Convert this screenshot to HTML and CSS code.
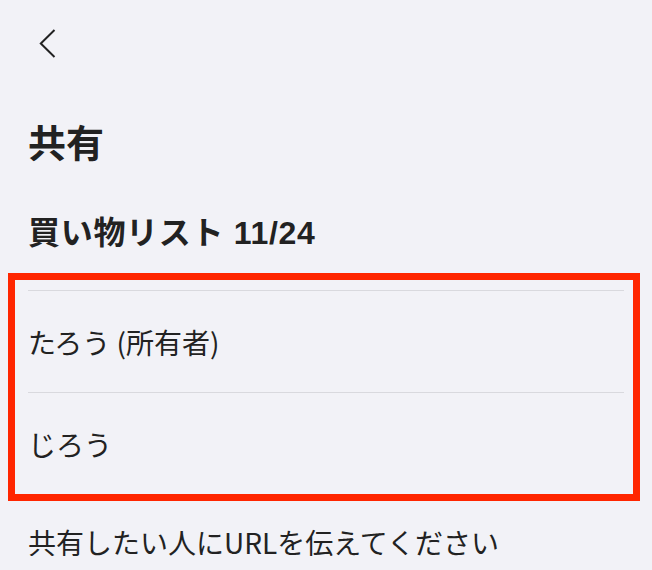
FILE: index.html
```html
<!DOCTYPE html>
<html lang="ja">
<head>
  <meta charset="UTF-8" />
  <meta name="viewport" content="width=device-width, initial-scale=1.0"/>
  <title>共有</title>
  <link rel="stylesheet" href="styles.css">
</head>
<body>
  <div class="page">
    <div class="nav">
      <svg class="back" width="17" height="30" viewBox="0 0 17 30">
        <path d="M15.5 1 L1.8 14.5 L15.5 28" fill="none" stroke="#222" stroke-width="2" />
      </svg>
    </div>
    <h1 class="title">共有</h1>
    <h2 class="list-name">買い物リスト 11/24</h2>

    <div class="members">
      <div class="member">たろう (所有者)</div>
      <div class="member">じろう</div>
    </div>

    <p class="hint">共有したい人にURLを伝えてください</p>
  </div>
</body>
</html>
```

FILE: styles.css
```css
body {
  margin: 0;
  background: #f2f2f7;
  color: #222;
  font-family: "Liberation Sans", "Noto Sans CJK JP", sans-serif;
}
.page {
  padding-top: 29px;
}
.nav {
  height: 29px;
  padding-left: 39px;
}
.back {
  display: block;
}
.title {
  margin: 67px 0 0 28px;
  font-size: 38px;
  line-height: 38px;
  font-weight: bold;
}
.list-name {
  margin: 54px 0 0 28px;
  font-size: 32px;
  line-height: 32px;
  font-weight: bold;
  letter-spacing: 0.7px;
}
.members {
  margin: 24px 12px 0 8px;
  border: 7px solid #ff2600;
  padding: 10px 9px 0 13px;
}
.member {
  border-top: 1px solid #d9d9de;
  height: 101px;
  display: flex;
  align-items: center;
  font-size: 28px;
  font-family: "Noto Sans CJK JP", sans-serif;
}
.hint {
  margin: 27px 0 0 28px;
  font-size: 28px;
  line-height: 28px;
  font-family: "Noto Sans CJK JP", sans-serif;
}
```
